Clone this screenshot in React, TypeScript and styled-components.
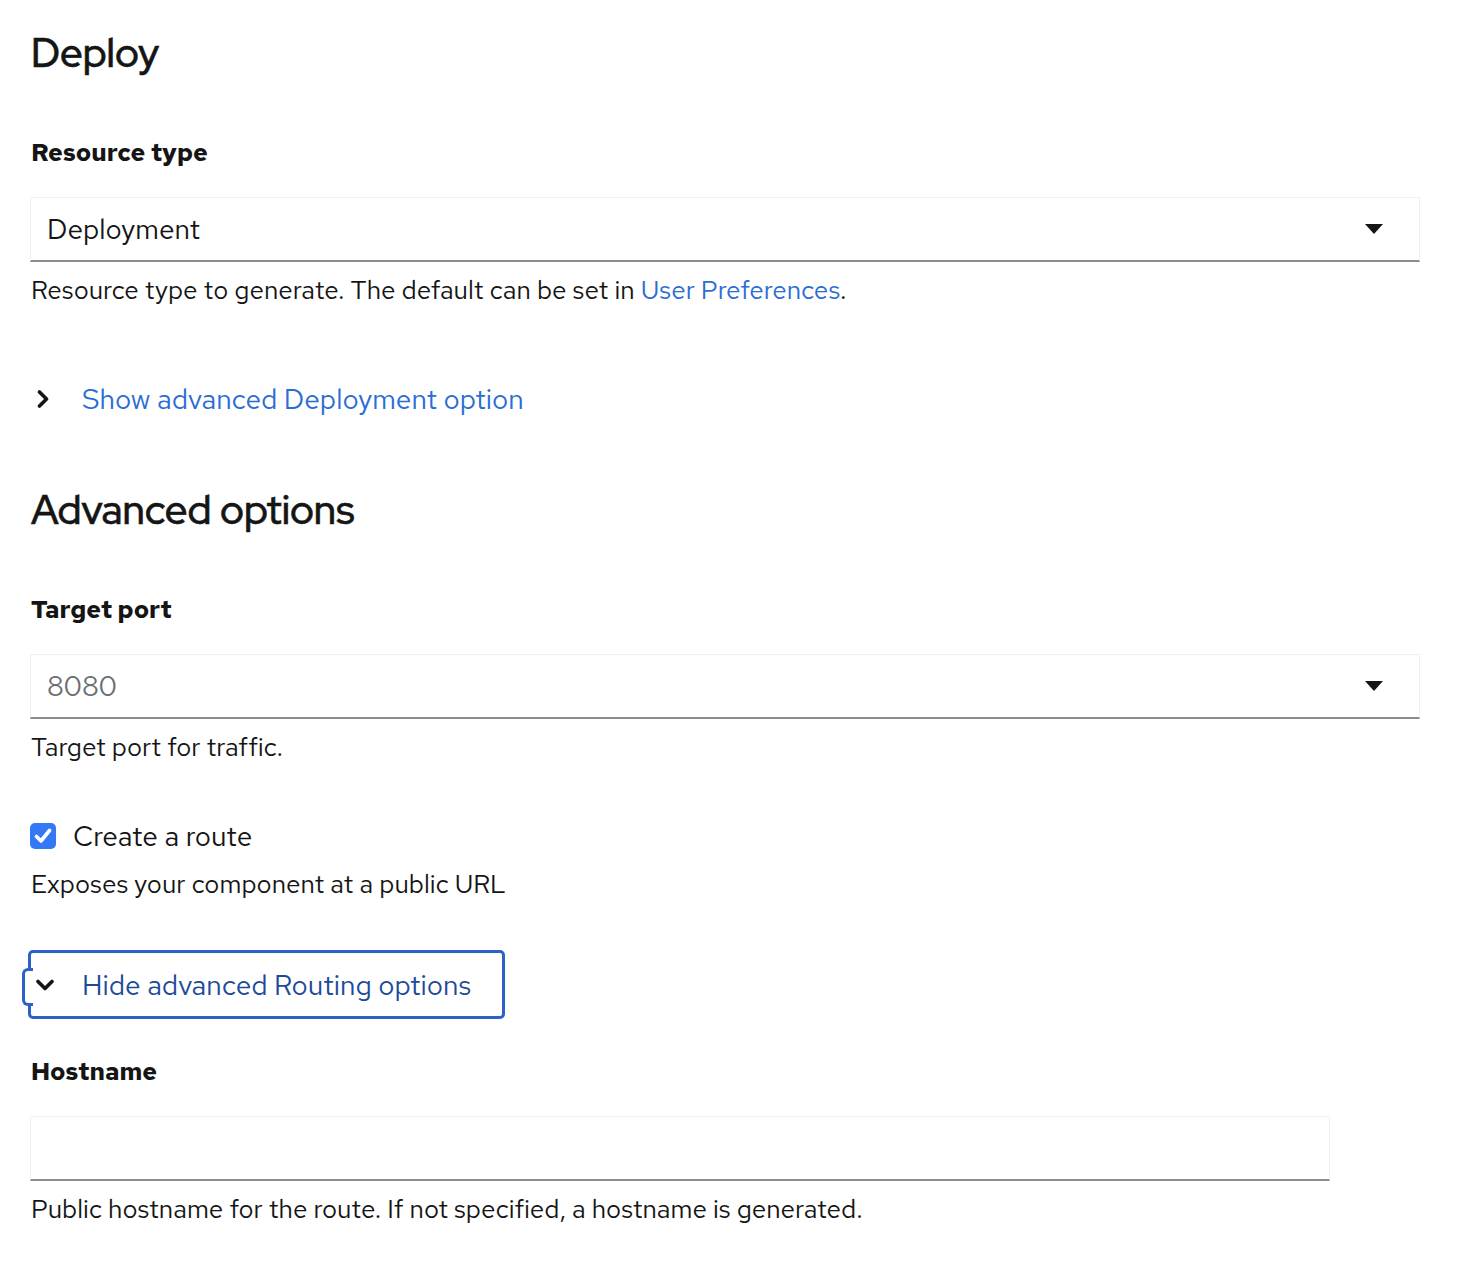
import React from "react";
import styled, { createGlobalStyle } from "styled-components";

const Global = createGlobalStyle`
  html, body { margin: 0; padding: 0; background: #fff; }
  body { font-family: "Red Hat Text", "Lato", "Noto Sans", sans-serif; color: #151515; }
`;

const Page = styled.div`
  padding: 25px 0 40px 31px;
  width: 1390px;
`;

const Heading = styled.h2<{ $top?: number }>`
  margin: ${(p) => p.$top ?? 0}px 0 0 0;
  font-family: "Red Hat Display", "Lato", "Noto Sans", sans-serif;
  font-weight: 500;
  font-size: 40px;
  line-height: 56px;
  color: #151515;
  -webkit-text-stroke: 0.6px #151515;
`;

const Label = styled.div<{ $top: number }>`
  margin-top: ${(p) => p.$top}px;
  font-size: 25px;
  line-height: 40px;
  font-weight: 700;
`;

const SelectBox = styled.div<{ $width: number; $muted?: boolean }>`
  box-sizing: border-box;
  margin: 24px 0 0 -1px;
  width: ${(p) => p.$width}px;
  height: 65px;
  border: 1px solid #f0f0f0;
  border-bottom: 2px solid #8a8d90;
  display: flex;
  align-items: center;
  justify-content: space-between;
  padding: 0 36px 0 16px;
  font-size: 28px;
  color: ${(p) => (p.$muted ? "#6a6e73" : "#151515")};
`;

const Help = styled.div<{ $top?: number }>`
  margin-top: ${(p) => p.$top ?? 8}px;
  font-size: 26px;
  line-height: 40px;
  color: #151515;
`;

const Link = styled.a`
  color: #2b6dd2;
  text-decoration: none;
`;

const Toggle = styled.div<{ $top: number; $focused?: boolean }>`
  position: relative;
  box-sizing: border-box;
  margin-top: ${(p) => p.$top}px;
  margin-left: ${(p) => (p.$focused ? -3 : 0)}px;
  display: inline-flex;
  align-items: center;
  height: ${(p) => (p.$focused ? 69 : 40)}px;
  padding: ${(p) => (p.$focused ? "0 31px 0 0" : "0")};
  border: ${(p) => (p.$focused ? "3px solid #2c62c8" : "none")};
  border-radius: ${(p) => (p.$focused ? 5 : 0)}px;
  font-size: 28px;
  color: ${(p) => (p.$focused ? "#1e4b98" : "#2b6dd2")};
  align-self: flex-start;
`;

const Bump = styled.span`
  position: absolute;
  left: -9px;
  top: 15px;
  width: 8px;
  height: 32px;
  border: 3px solid #2c62c8;
  border-right: none;
  border-radius: 6px 0 0 6px;
  background: #fff;
`;

const ChevronSlot = styled.span<{ $focused?: boolean }>`
  display: inline-flex;
  align-items: center;
  width: 51px;
  padding-left: ${(p) => (p.$focused ? 5 : 6)}px;
  box-sizing: border-box;
`;

const Column = styled.div`
  display: flex;
  flex-direction: column;
`;

const CheckRow = styled.label`
  margin-top: 49px;
  display: flex;
  align-items: center;
  gap: 17px;
  font-size: 28px;
  line-height: 40px;
  margin-left: -1px;
`;

const Check = styled.span`
  width: 26px;
  height: 26px;
  border-radius: 5px;
  background: #3478f6;
  display: inline-flex;
  align-items: center;
  justify-content: center;
`;

const Caret = () => (
  <svg width="18" height="10" viewBox="0 0 18 10">
    <path d="M0 0 H18 L9 10 Z" fill="#151515" />
  </svg>
);

const ChevronRight = () => (
  <svg width="12" height="18" viewBox="0 0 12 18">
    <path d="M2.5 2 L9.5 9 L2.5 16" fill="none" stroke="#151515" strokeWidth="3.6" strokeLinecap="round" strokeLinejoin="round" />
  </svg>
);

const ChevronDown = () => (
  <svg width="18" height="12" viewBox="0 0 18 12">
    <path d="M2 2.5 L9 9.5 L16 2.5" fill="none" stroke="#151515" strokeWidth="3.6" strokeLinecap="round" strokeLinejoin="round" />
  </svg>
);

const CheckMark = () => (
  <svg width="18" height="16" viewBox="0 0 18 16">
    <path d="M2.5 8.5 L7 13 L15.5 2.5" fill="none" stroke="#fff" strokeWidth="3.6" strokeLinecap="round" strokeLinejoin="round" />
  </svg>
);

export default function App() {
  return (
    <>
      <Global />
      <Page>
        <Column>
          <Heading>Deploy</Heading>
          <Label $top={52}>Resource type</Label>
          <SelectBox $width={1390}>
            <span>Deployment</span>
            <Caret />
          </SelectBox>
          <Help>
            Resource type to generate. The default can be set in <Link>User Preferences</Link>.
          </Help>
          <Toggle $top={69}>
            <ChevronSlot>
              <ChevronRight />
            </ChevronSlot>
            Show advanced Deployment option
          </Toggle>

          <Heading $top={63}>Advanced options</Heading>
          <Label $top={52}>Target port</Label>
          <SelectBox $width={1390} $muted>
            <span>8080</span>
            <Caret />
          </SelectBox>
          <Help>Target port for traffic.</Help>

          <CheckRow>
            <Check>
              <CheckMark />
            </Check>
            Create a route
          </CheckRow>
          <Help>Exposes your component at a public URL</Help>

          <Toggle $top={46} $focused>
            <Bump />
            <ChevronSlot $focused>
              <ChevronDown />
            </ChevronSlot>
            Hide advanced Routing options
          </Toggle>

          <Label $top={33}>Hostname</Label>
          <SelectBox $width={1300} />
          <Help>Public hostname for the route. If not specified, a hostname is generated.</Help>
        </Column>
      </Page>
    </>
  );
}
